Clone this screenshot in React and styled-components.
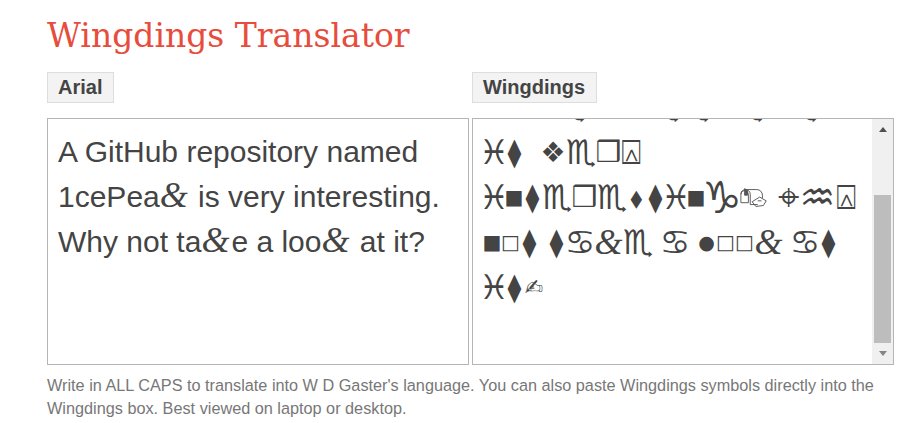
import React from "react";
import styled, { createGlobalStyle } from "styled-components";

const GlobalStyle = createGlobalStyle`
  html, body {
    margin: 0;
    background: #fff;
    overflow: hidden;
  }
`;

// advance width and font size per symbol, taken from the reference
const SYMBOLS = {
  "♓": { w: 22, size: 34 },
  "♒": { w: 37, size: 40 },
  "♏": { w: 30, size: 34 },
  "♋": { w: 28, size: 34 },
  "♑": { w: 34, size: 44 },
  "⧫": { w: 19, size: 28 },
  "⬧": { w: 19, size: 28 },
  "❖": { w: 26, size: 28 },
  "❒": { w: 25, size: 29 },
  "⍓": { w: 20, size: 34 },
  "■": { w: 18, size: 20 },
  "□": { w: 19, size: 20 },
  "●": { w: 19, size: 19 },
  "⌖": { w: 22, size: 38 },
  "✍": { w: 20, size: 22 },
  "&": { w: 29, size: 36 },
  " ": { w: 8, size: 27 },
};

const Page = styled.main`
  width: 847px;
  height: 423px;
  padding: 0 21px 0 47px;
  font-family: "Liberation Sans", Arial, sans-serif;
  color: #444;
`;

const Title = styled.h1`
  margin: 0;
  padding-top: 15px;
  height: 72px;
  box-sizing: border-box;
  font-family: "DejaVu Serif", "Liberation Serif", serif;
  font-size: 33px;
  line-height: 42px;
  font-weight: 400;
  color: #e74c3c;
`;

const Columns = styled.div`
  display: grid;
  grid-template-columns: 422px 422px;
  column-gap: 3px;
`;

const Column = styled.section`
  display: flex;
  flex-direction: column;
  align-items: flex-start;
`;

const Label = styled.div`
  height: 31px;
  box-sizing: border-box;
  padding: 0 11px 0 10px;
  margin-bottom: 15px;
  border: 1px solid #ddd;
  background: #f3f3f3;
  font-size: 20px;
  line-height: 29px;
  font-weight: 700;
`;

const Box = styled.div`
  display: flex;
  width: 100%;
  height: 247px;
  box-sizing: border-box;
  border: 1px solid #b5b5b5;
  overflow: hidden;
`;

const BoxText = styled.div`
  flex: 1;
  min-width: 0;
  padding: ${(p) => (p.$scrolled ? "0 8px 0 10px" : "10px")};
  font-size: 30px;
  line-height: 45px;
  overflow: hidden;
`;

const ScrolledLines = styled.div`
  margin-top: -34px;
  font-family: "DejaVu Sans", "Liberation Sans", sans-serif;
`;

const Row = styled.div`
  display: flex;
  align-items: center;
  height: 45px;
  white-space: nowrap;
`;

const Symbol = styled.span`
  flex: none;
  display: flex;
  justify-content: center;
  width: ${(p) => p.$w}px;
  font-size: ${(p) => p.$size}px;
  line-height: 45px;
  ${(p) => p.$script && `font-family: "Liberation Serif", serif; font-style: italic;`}
`;

const Amp = styled.span`
  display: inline-block;
  width: 30px;
  font-family: "Liberation Serif", serif;
  font-style: italic;
  font-size: 36px;
  line-height: 1;
`;

const MailIcon = styled.svg`
  flex: none;
  width: 30px;
  height: 24px;
  fill: none;
  stroke: #555;
  stroke-width: 1;
`;

const Scrollbar = styled.div`
  flex: none;
  width: 21px;
  display: flex;
  flex-direction: column;
  align-items: center;
  background: #f0f0f0;
`;

const Arrow = styled.div`
  flex: none;
  height: 21px;
  width: 100%;
  display: flex;
  align-items: center;
  justify-content: center;

  &::before {
    content: "";
    border-left: 4.5px solid transparent;
    border-right: 4.5px solid transparent;
    border-${(p) => (p.$down ? "top" : "bottom")}: 5px solid ${(p) => (p.$down ? "#858585" : "#505050")};
  }
`;

const Track = styled.div`
  flex: 1;
  width: 100%;
  display: flex;
  flex-direction: column;
  justify-content: flex-end;
  align-items: center;
`;

const Thumb = styled.div`
  width: 17px;
  height: 148px;
  background: #bdbdbd;
`;

const Note = styled.p`
  margin: 0;
  padding-top: 9px;
  font-size: 16.25px;
  line-height: 23px;
  color: #777;
`;

const Symbols = ({ text }) =>
  Array.from(text).map((ch, i) => (
    <Symbol key={i} $w={SYMBOLS[ch].w} $size={SYMBOLS[ch].size} $script={ch === "&"}>
      {ch === " " ? "\u00a0" : ch}
    </Symbol>
  ));

const Mailbox = () => (
  <MailIcon viewBox="0 0 32 24">
    <path d="M2 8a5 5 0 0 1 5-5h12a6 6 0 0 1 6 6v3" />
    <path d="M2 8v9h8v-9a4 4 0 0 0-8 0z" />
    <path d="M7 3a5 5 0 0 1 5 5v11h8" />
    <path d="M14 16l8-5 7 4-3 5-8 1z" />
    <path d="M6 2v7h3V4z" fill="#555" />
    <path d="M20 15h4" />
  </MailIcon>
);

export default function App() {
  return (
    <Page>
      <GlobalStyle />
      <Title>Wingdings Translator</Title>
      <Columns>
        <Column>
          <Label>Arial</Label>
          <Box>
            <BoxText>
              A GitHub repository named 1cePea<Amp>&amp;</Amp> is very interesting. Why not ta
              <Amp>&amp;</Amp>e a loo<Amp>&amp;</Amp> at it?
            </BoxText>
          </Box>
        </Column>
        <Column>
          <Label>Wingdings</Label>
          <Box>
            <BoxText $scrolled>
              <ScrolledLines>
                <Row><Symbols text="         ♏        ♏♏   ♏   ♏" /></Row>
                <Row><Symbols text="♓⧫  ❖♏❒⍓" /></Row>
                <Row><Symbols text="♓■⧫♏❒♏⬧⧫♓■♑" /><Mailbox /><Symbols text=" ⌖♒⍓" /></Row>
                <Row><Symbols text="■□⧫ ⧫♋&♏ ♋ ●□□& ♋⧫" /></Row>
                <Row><Symbols text="♓⧫✍" /></Row>
              </ScrolledLines>
            </BoxText>
            <Scrollbar>
              <Arrow />
              <Track>
                <Thumb />
              </Track>
              <Arrow $down />
            </Scrollbar>
          </Box>
        </Column>
      </Columns>
      <Note>
        Write in ALL CAPS to translate into W D Gaster's language. You can also paste Wingdings symbols
        directly into the Wingdings box. Best viewed on laptop or desktop.
      </Note>
    </Page>
  );
}
